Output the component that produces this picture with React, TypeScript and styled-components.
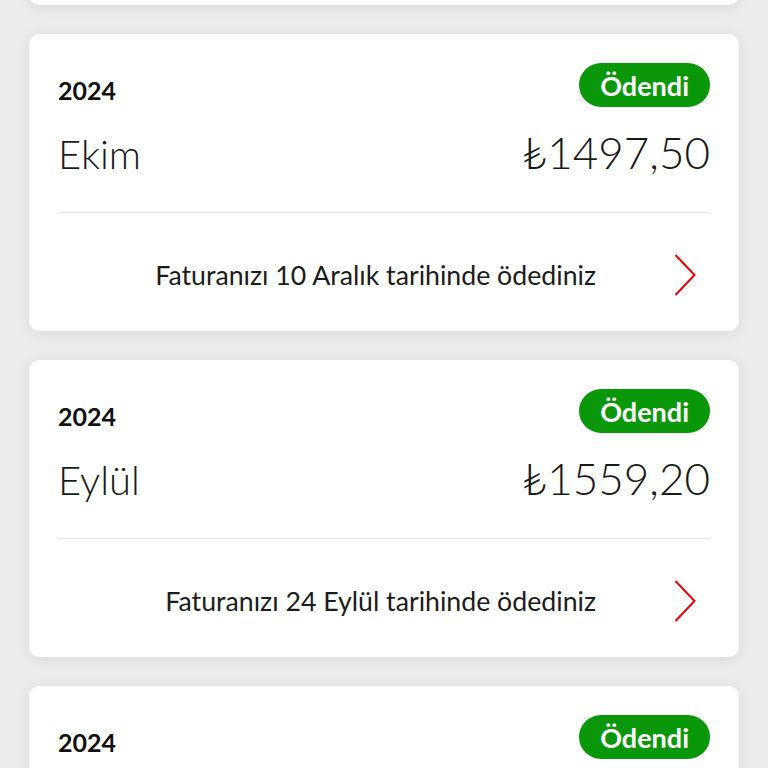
import styled, { createGlobalStyle } from "styled-components";

const GlobalStyle = createGlobalStyle`
  html, body {
    margin: 0;
    padding: 0;
    background: #ebebeb;
    font-family: Lato, "Noto Sans", sans-serif;
  }
`;

const Page = styled.div`
  height: 768px;
  overflow: hidden;
  background: #ebebeb;
`;

const List = styled.div`
  display: flex;
  flex-direction: column;
  gap: 29px;
  padding: 0 29px;
  margin-top: -292px;
`;

const Card = styled.div`
  background: #ffffff;
  border-radius: 10px;
  box-shadow: 0 2px 14px rgba(0, 0, 0, 0.07);
  padding: 29px 29px 0;
  height: 297px;
  box-sizing: border-box;
  display: flex;
  flex-direction: column;
`;

const TopRow = styled.div`
  display: flex;
  justify-content: space-between;
  align-items: flex-end;
  height: 44px;
`;

const Year = styled.span`
  font-size: 25px;
  font-weight: 700;
  color: #111;
  line-height: 1;
  margin-bottom: 4px;
`;

const Badge = styled.span`
  display: inline-flex;
  align-items: center;
  justify-content: center;
  height: 44px;
  padding: 0 21px;
  border-radius: 22px;
  background: #0a970a;
  color: #fff;
  font-size: 27px;
  font-weight: 700;
  box-sizing: border-box;
`;

const MainRow = styled.div`
  display: flex;
  justify-content: space-between;
  align-items: baseline;
  margin-top: 20px;
  padding-bottom: 33px;
  border-bottom: 1px solid #e6e6e6;
`;

const Month = styled.span`
  font-size: 40px;
  font-weight: 300;
  color: #1a1a1a;
  line-height: 50px;
`;

const Amount = styled.span`
  font-size: 44px;
  font-weight: 300;
  color: #1a1a1a;
  line-height: 50px;
`;

const Footer = styled.div`
  flex: 1;
  display: flex;
  justify-content: flex-end;
  align-items: center;
  gap: 78px;
  padding-right: 14px;
`;

const Note = styled.span`
  font-size: 26.7px;
  font-weight: 400;
  color: #1c1c1c;
  margin-top: 6px;
`;

const Chevron = styled.svg`
  width: 22px;
  height: 42px;
  flex-shrink: 0;
  margin-top: 6px;
`;

type Bill = {
  year: string;
  month: string;
  amount: string;
  note: string;
};

const bills: Bill[] = [
  {
    year: "2024",
    month: "Kasım",
    amount: "₺1512,40",
    note: "Faturanızı 9 Ocak tarihinde ödediniz",
  },
  {
    year: "2024",
    month: "Ekim",
    amount: "₺1497,50",
    note: "Faturanızı 10 Aralık tarihinde ödediniz",
  },
  {
    year: "2024",
    month: "Eylül",
    amount: "₺1559,20",
    note: "Faturanızı 24 Eylül tarihinde ödediniz",
  },
  {
    year: "2024",
    month: "Ağustos",
    amount: "₺1480,10",
    note: "Faturanızı 26 Ağustos tarihinde ödediniz",
  },
];

function BillCard({ bill }: { bill: Bill }) {
  return (
    <Card>
      <TopRow>
        <Year>{bill.year}</Year>
        <Badge>Ödendi</Badge>
      </TopRow>
      <MainRow>
        <Month>{bill.month}</Month>
        <Amount>{bill.amount}</Amount>
      </MainRow>
      <Footer>
        <Note>{bill.note}</Note>
        <Chevron viewBox="0 0 22 42" fill="none">
          <polyline
            points="1.5,1 20.5,21 1.5,41"
            stroke="#e60000"
            strokeWidth="2"
            strokeLinejoin="miter"
          />
        </Chevron>
      </Footer>
    </Card>
  );
}

export default function App() {
  return (
    <Page>
      <GlobalStyle />
      <List>
        {bills.map((b) => (
          <BillCard key={b.month} bill={b} />
        ))}
      </List>
    </Page>
  );
}
